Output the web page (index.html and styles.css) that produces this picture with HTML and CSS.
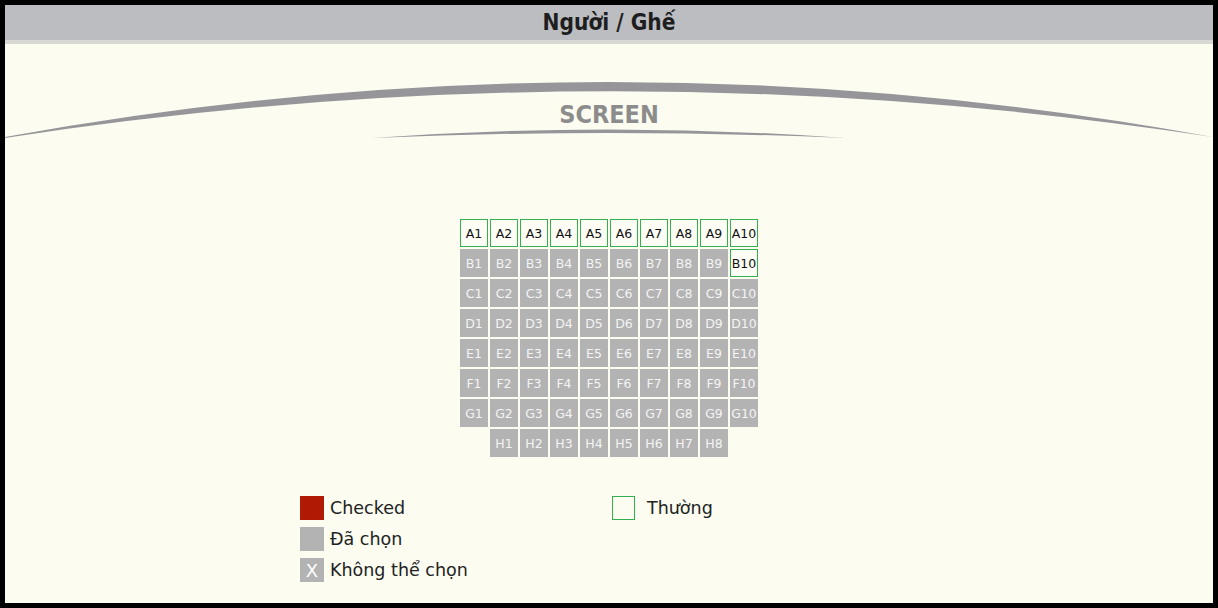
FILE: index.html
```html
<!DOCTYPE html>
<html lang="vi">
<head>
    <meta charset="UTF-8">
    <meta name="viewport" content="width=device-width, initial-scale=1.0">
    <title>Người / Ghế</title>
    <link rel="stylesheet" href="styles.css">
</head>
<body>
    <div class="page">
        <h1 class="title">Người / Ghế</h1>

        <!-- màn hình chiếu -->
        <svg class="screen" viewBox="0 0 1208 100" preserveAspectRatio="none">
            <path d="M0,93 Q604,-17 1208,93 Q604,1 0,94 Z" fill="#96969a"/>
            <path d="M367,94 Q604,77 840,94 Q604,84 367,94 Z" fill="#96969a"/>
            <text x="604" y="79" text-anchor="middle">SCREEN</text>
        </svg>

        <div class="seats" id="seats"></div>

        <div class="legend">
            <div class="legend-item"><span class="box checked"></span>Checked</div>
            <div class="legend-item"><span class="box normal"></span>Thường</div>
            <div class="legend-item"><span class="box taken"></span>Đã chọn</div>
            <div></div>
            <div class="legend-item"><span class="box taken">X</span>Không thể chọn</div>
        </div>
    </div>

    <script>
        const rows = ['A', 'B', 'C', 'D', 'E', 'F', 'G', 'H'];
        const seats = document.getElementById('seats');

        rows.forEach(row => {
            for (let i = 1; i <= 10; i++) {
                const seat = document.createElement('div');
                seat.className = 'seat';
                // hàng H chỉ có 8 ghế, lùi vào một ô
                if (row === 'H' && (i === 1 || i === 10)) {
                    seat.classList.add('empty');
                    seats.appendChild(seat);
                    continue;
                }
                const num = row === 'H' ? i - 1 : i;
                seat.innerText = row + num;
                if (row === 'A' || (row === 'B' && i === 10)) {
                    seat.classList.add('free');
                } else {
                    seat.classList.add('taken');
                }
                seats.appendChild(seat);
            }
        });
    </script>
</body>
</html>
```

FILE: styles.css
```css
* {
    box-sizing: border-box;
}

body {
    margin: 0;
    background: #000;
    font-family: "DejaVu Sans", Verdana, sans-serif;
}

.page {
    margin: 5px;
    height: 598px;
    background: #fcfcf1;
    overflow: hidden;
}

.title {
    margin: 0;
    height: 39px;
    line-height: 35px;
    text-align: center;
    font-family: "DejaVu Sans Condensed", "DejaVu Sans", sans-serif;
    font-size: 22.5px;
    font-weight: bold;
    color: #1e1e1e;
    background: #bcbdc1;
    border-bottom: 4px solid #d8d8d4;
}

.screen {
    display: block;
    width: 100%;
    height: 100px;
}

.screen text {
    font-family: "DejaVu Sans Condensed", "DejaVu Sans", sans-serif;
    font-weight: bold;
    font-size: 25px;
    fill: #8c8c8c;
}

.seats {
    display: grid;
    grid-template-columns: repeat(10, 28px);
    grid-auto-rows: 28px;
    gap: 2px;
    width: max-content;
    margin: 75px auto 0;
}

.seat {
    display: flex;
    align-items: center;
    justify-content: center;
    font-size: 12.5px;
}

.seat.free {
    border: 1px solid #35b04f;
    background: #fdfdf6;
    color: #111;
}

.seat.taken {
    background: #b3b3b3;
    color: #f4f4f4;
}

.legend {
    display: grid;
    grid-template-columns: 312px auto;
    row-gap: 7px;
    width: 618px;
    margin: 39px auto 0;
}

.legend-item {
    display: flex;
    align-items: center;
    height: 24px;
    font-size: 17.5px;
    color: #222;
}

.box {
    width: 24px;
    height: 24px;
    margin-right: 6px;
    display: flex;
    align-items: center;
    justify-content: center;
    color: #fff;
    font-size: 18px;
}

.box.checked {
    background: #b01a04;
}

.box.taken {
    background: #b3b3b3;
}

.box.normal {
    width: 23px;
    border: 1px solid #35b04f;
    margin-right: 12px;
}
```
